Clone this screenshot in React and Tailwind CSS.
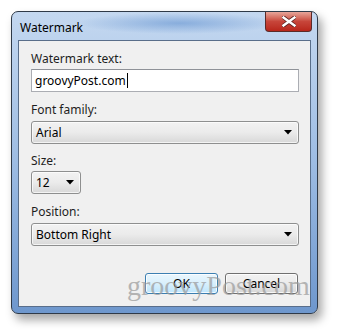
import React from 'react'

function Arrow() {
  return (
    <svg width="8" height="5" viewBox="0 0 8 5" className="shrink-0">
      <path d="M0 0 H8 L4 4.5 Z" fill="#000" />
    </svg>
  )
}

function Select({ value, className = '' }) {
  return (
    <div
      className={`h-[23px] flex items-center justify-between pl-[4px] pr-[6px] rounded-[3px] border border-[#8e8f8f] bg-gradient-to-b from-[#f2f2f2] via-[#ebebeb] to-[#d8d8d8] shadow-[inset_0_0_0_1px_rgba(255,255,255,0.7)] text-[12px] text-black ${className}`}
    >
      <span>{value}</span>
      <Arrow />
    </div>
  )
}

function Label({ children, className = '' }) {
  return <div className={`text-[12px] leading-[16px] text-[#1e1e1e] ${className}`}>{children}</div>
}

export default function App() {
  return (
    <div className="relative w-[338px] h-[334px] bg-white overflow-hidden font-['Segoe_UI','Noto_Sans',sans-serif]">
      {/* window frame */}
      <div className="ml-[11px] mt-[11px] w-[307px] h-[303px] rounded-[7px] border border-[#2f3a48] bg-gradient-to-b from-[#c4d8f0] via-[#9dbce3] to-[#6e97cd] shadow-[4px_6px_10px_rgba(0,0,0,0.35)] flex flex-col px-[6px] pb-[6px]">
        <div className="h-[28px] flex items-start justify-between shrink-0 bg-[radial-gradient(ellipse_at_55%_40%,rgba(90,140,205,0.55),transparent_45%)]">
          <div className="pt-[8px] pl-[2px] text-[12px] leading-[16px] text-black">Watermark</div>
          <div className="mr-[-1px] w-[47px] h-[20px] rounded-b-[4px] border border-t-0 border-[#5b2a28] bg-gradient-to-b from-[#e6a59a] via-[#c7453a] to-[#b8251a] flex items-center justify-center">
            <svg width="14" height="11" viewBox="0 0 14 11">
              <path d="M1 1 L13 10 M13 1 L1 10" stroke="#5a2320" strokeWidth="4" strokeLinecap="square" />
              <path d="M1.5 1.5 L12.5 9.5 M12.5 1.5 L1.5 9.5" stroke="#fff" strokeWidth="2.4" strokeLinecap="square" />
            </svg>
          </div>
        </div>

        {/* client area */}
        <div className="flex-1 bg-[#f0f0f0] border border-[#596e8a] pl-[12px] pr-[11px] pt-[10px] flex flex-col">
          <Label>Watermark text:</Label>
          <div className="mt-[2px] h-[23px] border border-[#abadb3] border-t-[#8f9298] bg-white flex items-center pl-[3px] text-[12px] text-black">
            <span>groovyPost.com</span>
            <span className="ml-[1px] w-[1px] h-[15px] bg-black" />
          </div>

          <Label className="mt-[10px]">Font family:</Label>
          <Select value="Arial" className="mt-[3px]" />

          <Label className="mt-[9px]">Size:</Label>
          <Select value="12" className="mt-[2px] w-[50px]" />

          <Label className="mt-[10px]">Position:</Label>
          <Select value="Bottom Right" className="mt-[3px]" />

          <div className="mt-[27px] flex justify-end gap-[7px] pr-[1px]">
            <button className="w-[73px] h-[21px] rounded-[3px] border border-[#3c7fb1] bg-gradient-to-b from-[#eaf6fd] via-[#d9f0fc] to-[#bee6fd] shadow-[inset_0_0_0_1px_rgba(255,255,255,0.8)] text-[12px] text-black">
              OK
            </button>
            <button className="w-[73px] h-[21px] rounded-[3px] border border-[#707070] bg-gradient-to-b from-[#f2f2f2] via-[#ebebeb] to-[#d6d6d6] shadow-[inset_0_0_0_1px_rgba(255,255,255,0.8)] text-[12px] text-black">
              Cancel
            </button>
          </div>
        </div>
      </div>

      {/* site watermark overlay */}
      <div className="absolute left-[127px] top-[269px] text-[28px] leading-[34px] text-[#9a9a9a] opacity-70 font-['Liberation_Serif',serif] pointer-events-none">
        groovyPost.com
      </div>
    </div>
  )
}
